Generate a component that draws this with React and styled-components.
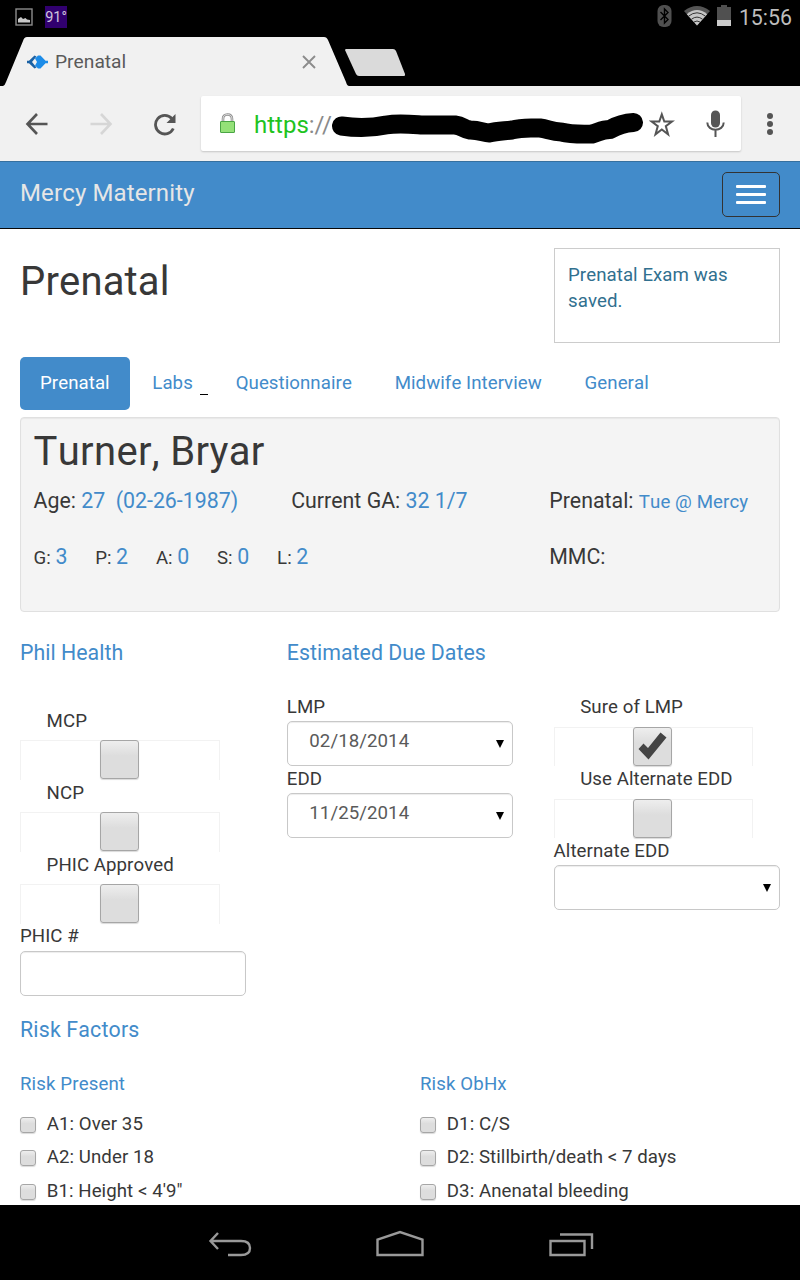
import React from "react";
import styled, { createGlobalStyle } from "styled-components";

const blue = "#428bca";

const Global = createGlobalStyle`
  *, *::before, *::after { box-sizing: border-box; }
  body { margin: 0; background: #000; }
  svg { display: block; flex: none; }
`;

const Screen = styled.div`
  width: 800px;
  height: 1280px;
  display: flex;
  flex-direction: column;
  overflow: hidden;
  background: #000;
  color: #383838;
  font-family: Roboto, "Liberation Sans", sans-serif;
  font-size: 18.67px;
  line-height: 26.67px;
  font-kerning: none;
`;

const StatusBar = styled.div`
  height: 37px;
  flex: none;
  display: flex;
  align-items: flex-start;
  padding: 0 8px 0 15px;
`;

const Temperature = styled.div`
  width: 22px;
  height: 22px;
  margin: 6px auto 0 12px;
  background: #31006f;
  color: #cfc5dc;
  font-size: 14.5px;
  line-height: 23px;
  text-align: center;
`;

const StatusIcon = styled.svg`
  margin: ${(p) => p.$m};
`;

const Clock = styled.div`
  color: #bebebe;
  font-size: 21.33px;
  line-height: 36px;
  margin-left: 8px;
`;

const TabStrip = styled.div`
  height: 49px;
  flex: none;
  display: flex;
  padding-left: 3px;
`;

const BrowserTab = styled.div`
  width: 346px;
  height: 49px;
  display: flex;
  align-items: center;
  padding: 0 33px 0 24px;
  background: #f1f1f1;
  color: #5a5a5a;
  font-size: 19.2px;
  clip-path: path("M0 49 C2 48 2 47 3 45 L20 4 C21 1 22 0 24 0 L321 0 C323 0 324 1 325 3 L343 45 C344 48 344 48 346 49 Z");
`;

const TabTitle = styled.span`
  flex: 1;
  margin: 1px 0 0 7px;
`;

const NewTab = styled.div`
  width: 61px;
  height: 27px;
  margin: 12px 0 0 -4px;
  background: #dadada;
  clip-path: path("M0 1 Q0 0 1.5 0 L48 0 Q50 0 51 2 L60 25 Q60.5 27 59 27 L14 27 Q12 27 11 25 Z");
`;

const Toolbar = styled.div`
  height: 75px;
  flex: none;
  display: flex;
  align-items: center;
  padding: 0 25px 0 25px;
  background: #f1f1f1;
`;

const ToolIcon = styled.svg`
  margin-left: ${(p) => p.$left || 0}px;
`;

const AddressBar = styled.div`
  width: 540px;
  height: 55px;
  margin-left: 24px;
  display: flex;
  align-items: center;
  padding-left: 18px;
  border-radius: 2px;
  background: #fff;
  box-shadow: 0 1px 2px rgba(0, 0, 0, 0.18);
`;

const Scheme = styled.div`
  margin: 2px 0 0 18px;
  width: 77px;
  color: #8a8a8a;
  font-size: 24px;
  line-height: 32px;
  font-kerning: normal;
  white-space: nowrap;
  b { font-weight: 400; color: #1ec31e; }
`;

const Navbar = styled.div`
  height: 68px;
  flex: none;
  display: flex;
  align-items: flex-start;
  justify-content: space-between;
  padding: 10px 20px 0;
  background: ${blue};
  border-top: 1px solid #36709f;
  border-bottom: 1px solid #080808;
`;

const Brand = styled.div`
  color: #e6e6e6;
  font-size: 24px;
  line-height: 30px;
  letter-spacing: 0.13px;
  margin-top: 6px;
`;

const MenuButton = styled.div`
  width: 58px;
  height: 45px;
  display: flex;
  flex-direction: column;
  align-items: center;
  justify-content: center;
  gap: 5.33px;
  border: 1px solid #333;
  border-radius: 5px;
`;

const MenuLine = styled.span`
  width: 30px;
  height: 2.67px;
  border-radius: 1px;
  background: #fff;
`;

const Page = styled.main`
  height: 976px;
  flex: none;
  padding: 0 20px;
  overflow: hidden;
  background: #fff;
  letter-spacing: 0.06px;
`;

const PageHead = styled.div`
  height: 128px;
  display: flex;
  justify-content: space-between;
  padding-top: 19px;
`;

const Title = styled.h1`
  margin: ${(p) => p.$m || "0"};
  font-size: 40px;
  line-height: 44px;
  font-weight: 400;
  letter-spacing: ${(p) => p.$spacing || 0.15}px;
`;

const Notice = styled.div`
  width: 226px;
  height: 95px;
  padding: 13px 13px;
  border: 1px solid #ccc;
  line-height: 26px;
  color: #31708f;
`;

const Pills = styled.nav`
  display: flex;
  gap: 2.8px;
`;

const Pill = styled.a`
  position: relative;
  height: 53px;
  padding: 13px ${(p) => (p.$active ? 19.8 : 20)}px 13px 20px;
  border-radius: 5px;
  white-space: nowrap;
  color: ${(p) => (p.$active ? "#fff" : blue)};
  background: ${(p) => (p.$active ? blue : "transparent")};
`;

const Caret = styled.i`
  position: absolute;
  right: 5px;
  top: 37px;
  width: 8px;
  height: 1px;
  background: #000;
`;

const Well = styled.section`
  height: 195px;
  margin-top: 6.5px;
  padding: 12px 12.5px;
  border: 1px solid #e0e0e0;
  border-radius: 4px;
  background: #f4f4f4;
  box-shadow: inset 0 1px 1px rgba(0, 0, 0, 0.05);
`;

const Facts = styled.div`
  display: grid;
  grid-template-columns: 257.7px 258px 1fr;
  margin-top: ${(p) => p.$top}px;
  font-size: 21.33px;
  line-height: 30px;
  letter-spacing: 0;
  white-space: pre;
`;

const Gravida = styled.div`
  grid-column: span 2;
  display: flex;
  gap: 27.8px;
`;

const Small = styled.span`
  font-size: 18.67px;
`;

const Value = styled.span`
  color: ${blue};
  font-size: ${(p) => (p.$small ? "18.67px" : "inherit")};
  letter-spacing: ${(p) => (p.$small ? "0.1px" : "0")};
`;

const Columns = styled.div`
  display: grid;
  grid-template-columns: repeat(3, 226px);
  column-gap: 40.8px;
`;

const Column = styled.div`
  padding-top: ${(p) => p.$top || 0}px;
`;

const Heading = styled.h3`
  margin: ${(p) => p.$m || "0"};
  color: ${blue};
  font-size: ${(p) => (p.$sub ? 18.67 : 21.33)}px;
  line-height: ${(p) => (p.$sub ? 26.67 : 30)}px;
  font-weight: 400;
  letter-spacing: ${(p) => p.$spacing || 0.03}px;
`;

const Label = styled.div`
  height: 26.67px;
  padding-left: ${(p) => (p.$indent ? 26.6 : 0)}px;
  line-height: ${(p) => (p.$tight ? 25.6 : 26.67)}px;
`;

const Track = styled.div`
  width: ${(p) => p.$w || 200}px;
  height: 39.83px;
  margin-top: 5.5px;
  padding-left: ${(p) => (p.$w ? 78.5 : 79)}px;
  border: solid #f2f2f2;
  border-width: 1px 1px 0;
`;

const Box = styled.div`
  width: ${(p) => p.$size}px;
  height: ${(p) => p.$size}px;
  flex: none;
  display: flex;
  align-items: center;
  justify-content: center;
  margin-top: ${(p) => p.$up || 0}px;
  border: 1px solid #a6a6a6;
  border-radius: 3px;
  background: linear-gradient(#eee, #ddd 40%, #ddd);
  box-shadow: 0 1px 1px rgba(0, 0, 0, 0.15);
`;

const Field = styled.div`
  height: 45.33px;
  display: flex;
  justify-content: space-between;
  align-items: center;
  padding: 0 8px 4px 21.5px;
  border: 1px solid #c8c8c8;
  border-radius: 5px;
  background: #fff;
  box-shadow: inset 0 1px 1px rgba(0, 0, 0, 0.075);
  color: #5a5a5a;
`;

const DropArrow = styled.svg`
  margin-top: 4px;
`;

const Risks = styled.div`
  display: grid;
  grid-template-columns: 400px 1fr;
`;

const RiskRow = styled.div`
  height: 33.33px;
  display: flex;
  align-items: center;
  gap: 10.8px;
`;

const SystemNav = styled.div`
  flex: 1;
  display: flex;
  align-items: flex-start;
  padding: 25px 0 0 208px;
`;

function CheckBox({ label, checked, w }) {
  return (
    <>
      <Label $indent>{label}</Label>
      <Track $w={w}>
        <Box $size={39} $up={-1}>
          {checked && (
            <svg width="29" height="29" viewBox="0 0 29 29">
              <path d="M0.5 17 L5.5 11.5 L10 16 L22.5 0.5 L28.5 5.5 L10.5 27.5 Z" fill="#444" />
            </svg>
          )}
        </Box>
      </Track>
    </>
  );
}

function Select({ label, value }) {
  return (
    <>
      <Label>{label}</Label>
      <Field>
        <span>{value}</span>
        <DropArrow width="8" height="8" viewBox="0 0 8 8">
          <path d="M0 0H8L4 8Z" fill="#000" />
        </DropArrow>
      </Field>
    </>
  );
}

function RiskList({ title, items }) {
  return (
    <div>
      <Heading $sub $spacing={0.12} $m="0 0 10px">{title}</Heading>
      {items.map((t) => (
        <RiskRow key={t}>
          <Box $size={16} $up={1.6} />
          {t}
        </RiskRow>
      ))}
    </div>
  );
}

export default function App() {
  return (
    <Screen>
      <Global />
      <StatusBar>
        <StatusIcon $m="8px 0 0" width="18" height="18" viewBox="0 0 18 18">
          <rect x="1" y="1" width="16" height="16" fill="none" stroke="#8c8c8c" strokeWidth="1.4" />
          <path d="M3 14.5V11L6 9L8 11L10.5 10L12 11.5L15 12V14.5Z" fill="#c8c8c8" />
        </StatusIcon>
        <Temperature>91°</Temperature>
        <StatusIcon $m="5px 0 0" width="15" height="22" viewBox="0 0 15 22">
          <rect x="0.5" y="0" width="14" height="22" rx="6" fill="#505050" />
          <path d="M3.5 7L11 14.5L7.5 18V4L11 7.5L3.5 15" fill="none" stroke="#000" strokeWidth="1.4" />
        </StatusIcon>
        <StatusIcon $m="6px 0 0 12px" width="26" height="20" viewBox="0 0 26 20">
          <path d="M13 19.5L0 5Q13 -5 26 5Z" fill="#555" />
          <path d="M13 19.5L2.8 8.2Q13 0 23.2 8.2Z" fill="#c6c6c6" />
          <path d="M4.5 10.2Q13 3.4 21.5 10.2M7.5 13.2Q13 9 18.5 13.2M10 16Q13 14 16 16" fill="none" stroke="#333" strokeWidth="1" />
        </StatusIcon>
        <StatusIcon $m="5px 0 0 7px" width="14" height="21" viewBox="0 0 14 21">
          <path d="M0 2H4V0H10V2H14V21H0Z" fill="#505050" />
          <path d="M0 15H14V21H0Z" fill="#cbcbcb" />
        </StatusIcon>
        <Clock>15:56</Clock>
      </StatusBar>

      <TabStrip>
        <BrowserTab>
          <svg width="21" height="14" viewBox="0 0 21 14">
            <path d="M0 5.7H2L7.5 0.5L9.5 1.5L5 7L9.5 12.5L7.5 13.5L2 8.3H0Z" fill="#1b62a5" />
            <path d="M8 3.5L11 0.5H13.5L18.5 5.7H21V8.3H18.5L13.5 13.5H11L8 10.5L10 7Z" fill="#1c8ce8" />
          </svg>
          <TabTitle>Prenatal</TabTitle>
          <svg width="14" height="14" viewBox="0 0 14 14">
            <path d="M1 1L13 13M13 1L1 13" stroke="#8c8c8c" strokeWidth="1.9" />
          </svg>
        </BrowserTab>
        <NewTab />
      </TabStrip>

      <Toolbar>
        <ToolIcon width="24" height="24" viewBox="0 0 24 24">
          <path d="M22.5 12H3M12 2L2.5 12L12 22" fill="none" stroke="#555" strokeWidth="2.6" />
        </ToolIcon>
        <ToolIcon $left={40} width="24" height="24" viewBox="0 0 24 24">
          <path d="M1.5 12H21M12 2L21.5 12L12 22" fill="none" stroke="#d6d6d6" strokeWidth="2.6" />
        </ToolIcon>
        <ToolIcon $left={40} width="24" height="24" viewBox="0 0 24 24">
          <path d="M18.8 6A9.3 9.3 0 1 0 20.3 16" transform="translate(0 0.5)" fill="none" stroke="#555" strokeWidth="2.8" />
          <path d="M22.5 2V11H13.5Z" fill="#555" />
        </ToolIcon>
        <AddressBar>
          <svg width="17" height="21" viewBox="0 0 17 21">
            <path d="M4 9V6Q4 1.5 8.5 1.5T13 6V9" fill="none" stroke="#8f8f8f" strokeWidth="2.6" />
            <path d="M4 9V6Q4 1.5 8.5 1.5T13 6V9" fill="none" stroke="#e3e3e3" strokeWidth="0.9" />
            <rect x="1.5" y="8.5" width="14" height="11" rx="0.5" fill="#94e178" stroke="#4aa545" />
          </svg>
          <Scheme><b>https</b>://</Scheme>
          <svg width="312" height="40" viewBox="331 104 312 40">
            <path d="M341.5 126C355 128 372 128 386 125C398 123 408 124 421 125H455C463 126 463 129 470 130C480 130 484 133 489 133C497 131 504 131 512 130C522 127 530 128 540 128C548 129 552 132 561 132C569 134 576 134.5 592 134C599 132 602 129.5 610 129.5C616 126 622 123 633.5 122.5" fill="none" stroke="#000" strokeWidth="19" strokeLinecap="round" strokeLinejoin="round" />
          </svg>
          <ToolIcon $left={6} width="26" height="26" viewBox="0 0 26 26">
            <path d="M13 2.8L15.5 10H23.2L17 14.6L19.3 22.8L13 18L6.7 22.8L9 14.6L2.8 10H10.5Z" transform="translate(-0.2 0.5)" fill="none" stroke="#555" strokeWidth="2" />
          </ToolIcon>
          <ToolIcon $left={31} width="20" height="28" viewBox="0 0 20 28">
            <rect x="5" y="0.5" width="9" height="17" rx="4.5" fill="#555" />
            <path d="M1.3 12.5C1.3 22 17.7 22 17.7 12.5M9.5 19.5V27" fill="none" stroke="#555" strokeWidth="2" />
          </ToolIcon>
        </AddressBar>
        <ToolIcon $left={26} width="6" height="24" viewBox="0 0 6 24">
          <circle cx="3" cy="4" r="3" fill="#555" />
          <circle cx="3" cy="12" r="3" fill="#555" />
          <circle cx="3" cy="20" r="3" fill="#555" />
        </ToolIcon>
      </Toolbar>

      <Navbar>
        <Brand>Mercy Maternity</Brand>
        <MenuButton><MenuLine /><MenuLine /><MenuLine /></MenuButton>
      </Navbar>

      <Page>
        <PageHead>
          <Title $m="12px 0 0">Prenatal</Title>
          <Notice>Prenatal Exam was saved.</Notice>
        </PageHead>
        <Pills>
          <Pill $active>Prenatal</Pill>
          <Pill>Labs<Caret /></Pill>
          <Pill>Questionnaire</Pill>
          <Pill>Midwife Interview</Pill>
          <Pill>General</Pill>
        </Pills>
        <Well>
          <Title $spacing={0.33}>Turner, Bryar</Title>
          <Facts $top={12}>
            <span>Age: <Value>27  (02-26-1987)</Value></span>
            <span>Current GA: <Value>32 1/7</Value></span>
            <span>Prenatal: <Value $small>Tue @ Mercy</Value></span>
          </Facts>
          <Facts $top={25.5}>
            <Gravida>
              {[["G", 3], ["P", 2], ["A", 0], ["S", 0], ["L", 2]].map(([k, v]) => (
                <span key={k}><Small>{k}: </Small><Value>{v}</Value></span>
              ))}
            </Gravida>
            <span>MMC:</span>
          </Facts>
        </Well>
        <Columns>
          <Heading $m="26.5px 0 0">Phil Health</Heading>
          <Heading $m="26.5px 0 0">Estimated Due Dates</Heading>
        </Columns>
        <Columns>
          <Column $top={39.9}>
            <CheckBox label="MCP" />
            <CheckBox label="NCP" />
            <CheckBox label="PHIC Approved" />
            <Label $tight>PHIC #</Label>
            <Field />
          </Column>
          <Column $top={26.4}>
            <Select label="LMP" value="02/18/2014" />
            <Select label="EDD" value="11/25/2014" />
          </Column>
          <Column $top={26.4}>
            <CheckBox label="Sure of LMP" checked w={199} />
            <CheckBox label="Use Alternate EDD" w={199} />
            <Select label="Alternate EDD" />
          </Column>
        </Columns>
        <Heading $spacing={0.18} $m="19.3px 0 25.8px">Risk Factors</Heading>
        <Risks>
          <RiskList title="Risk Present" items={["A1: Over 35", "A2: Under 18", "B1: Height < 4'9\""]} />
          <RiskList title="Risk ObHx" items={["D1: C/S", "D2: Stillbirth/death < 7 days", "D3: Anenatal bleeding"]} />
        </Risks>
      </Page>

      <SystemNav>
        <svg width="386" height="30" viewBox="208 1230 386 30" fill="none" stroke="#999" strokeWidth="2.4">
          <path d="M218 1233L210.5 1241L218 1249M210 1241H241Q250 1241 250 1248T241 1255H228" />
          <path d="M377.5 1255V1239.5L400 1232L422.5 1239.5V1255Z" />
          <path d="M550.5 1241H584.5V1255H550.5ZM560 1234.5H592V1249" />
        </svg>
      </SystemNav>
    </Screen>
  );
}
